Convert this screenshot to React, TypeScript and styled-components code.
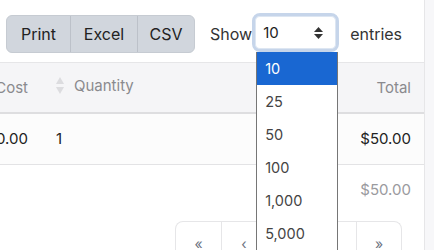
import React from "react";
import styled, { createGlobalStyle } from "styled-components";

const Global = createGlobalStyle`
  html, body { margin: 0; padding: 0; background: #ffffff; }
  body { font-family: Inter, "Noto Sans", sans-serif; color: #222; overflow: hidden; }
  * { box-sizing: border-box; }
`;

const Page = styled.div`
  display: flex;
  width: 434px;
  height: 250px;
  overflow: hidden;
`;

const Content = styled.div`
  width: 425px;
  flex: none;
  border-right: 1px solid #e6e6e8;
  display: flex;
  flex-direction: column;
  position: relative;
  & > * { flex: none; }
`;

const Side = styled.div`
  flex: 1;
  background: #f7f7f9;
`;

const Toolbar = styled.div`
  display: flex;
  padding: 13px 0 0 6px;
  height: 62px;
  align-items: flex-start;
`;

const ButtonGroup = styled.div`
  display: flex;
  margin-top: 2px;
  height: 38px;
  border: 1px solid #c6cbd2;
  border-radius: 6px;
  overflow: hidden;
  background: #d1d6dd;
`;

const GroupButton = styled.button<{ $w: number }>`
  width: ${(p) => p.$w}px;
  border: none;
  background: transparent;
  font-family: Inter, sans-serif;
  font-size: 16px;
  color: #222;
  padding: 0;
  & + & { border-left: 1px solid #bcc1c9; }
`;

const Label = styled.span<{ $ml: number }>`
  margin-left: ${(p) => p.$ml}px;
  font-size: 16px;
  color: #333;
  line-height: 20px;
  margin-top: 11px;
`;

const SelectWrap = styled.div`
  position: relative;
  margin-left: 0;
`;

const SelectBox = styled.div`
  width: 87px;
  height: 39px;
  border-radius: 8px;
  border: 3px solid #c6d5ea;
  background: #fff;
  display: flex;
  align-items: center;
  justify-content: space-between;
  padding: 0 13px 0 8px;
  font-size: 15px;
  color: #222;
  box-shadow: inset 0 0 0 1px #dde6f2;
`;

const DropList = styled.ul`
  position: absolute;
  top: 39px;
  left: 4px;
  width: 82px;
  margin: 0;
  padding: 0;
  list-style: none;
  background: #fff;
  border: 1px solid #767676;
  border-top: none;
  z-index: 5;
`;

const Option = styled.li<{ $active?: boolean }>`
  height: 33px;
  display: flex;
  align-items: center;
  padding-left: 8px;
  font-size: 14.5px;
  color: ${(p) => (p.$active ? "#fff" : "#444")};
  background: ${(p) => (p.$active ? "#1967d2" : "#fff")};
`;

const TableScroll = styled.div`
  display: flex;
  justify-content: flex-end;
  overflow: hidden;
  width: 424px;
`;

const Table = styled.table`
  width: 479px;
  flex: none;
  table-layout: fixed;
  border-collapse: collapse;
  font-size: 15px;
`;

const HeadRow = styled.tr`
  background: #f5f5f7;
  border-top: 1px solid #e6e6e8;
  border-bottom: 2px solid #dedee0;
  height: 50px;
`;

const BodyRow = styled.tr`
  background: #fcfcfc;
  border-bottom: 1px solid #e3e3e5;
  height: 52px;
`;

const FootRow = styled.tr`
  height: 49px;
`;

const Th = styled.th<{ $align?: string; $pl?: number; $pr?: number }>`
  font-weight: 400;
  color: #8a8a8e;
  text-align: ${(p) => p.$align || "left"};
  padding: 0 ${(p) => p.$pr ?? 0}px 0 ${(p) => p.$pl ?? 0}px;
  white-space: nowrap;
`;

const Td = styled.td<{ $align?: string; $pl?: number; $pr?: number; $muted?: boolean }>`
  color: ${(p) => (p.$muted ? "#9a9a9e" : "#222")};
  text-align: ${(p) => p.$align || "left"};
  padding: 0 ${(p) => p.$pr ?? 0}px 0 ${(p) => p.$pl ?? 0}px;
  white-space: nowrap;
`;

const SortHead = styled.span`
  display: inline-flex;
  align-items: center;
  gap: 10px;
`;

const Pager = styled.div`
  display: flex;
  align-self: flex-end;
  margin: 7px 22px 0 0;
  height: 40px;
  border: 1px solid #e6e6e8;
  border-bottom: none;
  border-radius: 8px 8px 0 0;
`;

const PageCell = styled.div`
  width: 45px;
  display: flex;
  justify-content: center;
  padding-top: 13px;
  font-size: 14px;
  color: #6b7280;
  & + & { border-left: 1px solid #e6e6e8; }
`;

const SortIcon = () => (
  <svg width="8" height="17" viewBox="0 0 8 17">
    <path d="M4 0 L8 7 L0 7 Z" fill="#dcdcdf" />
    <path d="M0 10 L8 10 L4 17 Z" fill="#dcdcdf" />
  </svg>
);

const Caret = () => (
  <svg width="9" height="12" viewBox="0 0 9 12">
    <path d="M4.5 0 L9 5 L0 5 Z" fill="#333" />
    <path d="M0 7 L9 7 L4.5 12 Z" fill="#333" />
  </svg>
);

export default function App() {
  return (
    <>
      <Global />
      <Page>
        <Content>
          <Toolbar>
            <ButtonGroup>
              <GroupButton $w={63}>Print</GroupButton>
              <GroupButton $w={67}>Excel</GroupButton>
              <GroupButton $w={57}>CSV</GroupButton>
            </ButtonGroup>
            <Label $ml={15}>Show</Label>
            <SelectWrap>
              <SelectBox>
                <span>10</span>
                <Caret />
              </SelectBox>
              <DropList>
                <Option $active>10</Option>
                <Option>25</Option>
                <Option>50</Option>
                <Option>100</Option>
                <Option>1,000</Option>
                <Option>5,000</Option>
              </DropList>
            </SelectWrap>
            <Label $ml={11}>entries</Label>
          </Toolbar>
          <TableScroll>
            <Table>
              <colgroup>
                <col style={{ width: 101 }} />
                <col style={{ width: 140 }} />
                <col style={{ width: 120 }} />
                <col style={{ width: 118 }} />
              </colgroup>
              <thead>
                <HeadRow>
                  <Th $align="right" $pr={18}>Cost</Th>
                  <Th $pl={10}>
                    <SortHead>
                      <SortIcon />
                      Quantity
                    </SortHead>
                  </Th>
                  <Th />
                  <Th $align="right" $pr={13}>Total</Th>
                </HeadRow>
              </thead>
              <tbody>
                <BodyRow>
                  <Td $align="right" $pr={18}>$50.00</Td>
                  <Td $pl={10}>1</Td>
                  <Td />
                  <Td $align="right" $pr={13}>$50.00</Td>
                </BodyRow>
                <FootRow>
                  <Td />
                  <Td />
                  <Td />
                  <Td $align="right" $pr={13} $muted>$50.00</Td>
                </FootRow>
              </tbody>
            </Table>
          </TableScroll>
          <Pager>
            <PageCell>«</PageCell>
            <PageCell>‹</PageCell>
            <PageCell>1</PageCell>
            <PageCell>›</PageCell>
            <PageCell>»</PageCell>
          </Pager>
        </Content>
        <Side />
      </Page>
    </>
  );
}
